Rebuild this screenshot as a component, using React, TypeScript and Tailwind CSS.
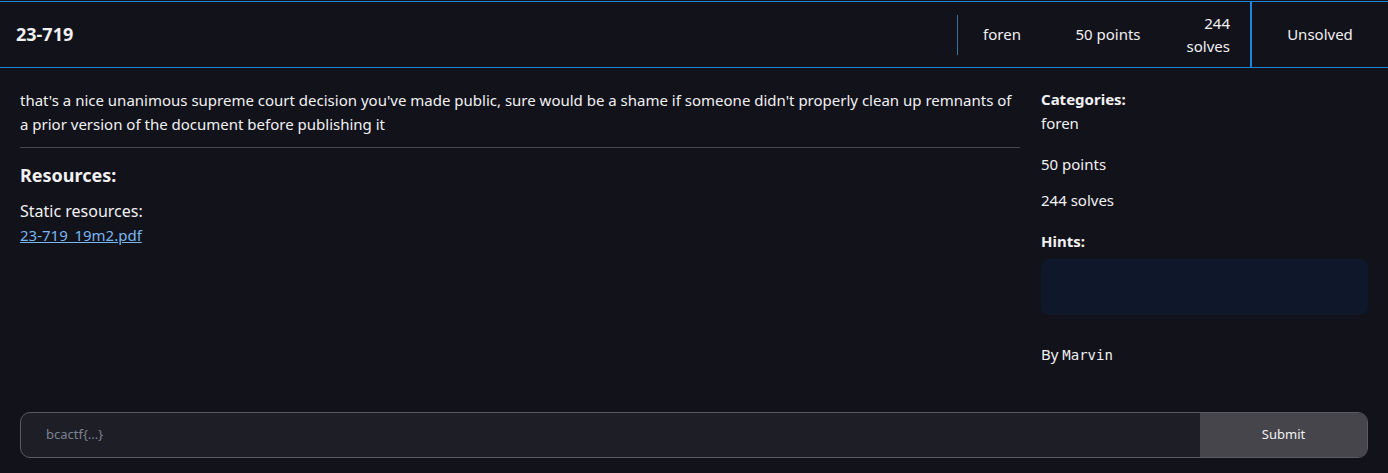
import React from "react";

const font = { fontFamily: '"Segoe UI", "Noto Sans", sans-serif' };

export default function App() {
  return (
    <div
      className="w-[1388px] h-[473px] bg-[#11121a] text-[#f1f1f3] overflow-hidden font-['Noto_Sans',sans-serif]"
      style={font}
    >
      {/* Header */}
      <div className="mt-px h-px bg-[#1f86dc]" />
      <div className="h-[65px] flex items-stretch">
        <div className="flex-1 flex items-center pl-4 text-[18px] font-bold">23-719</div>
        <div className="flex items-center">
          <div className="w-px h-[40px] bg-[#3d6f9e]" />
          <div className="w-[88px] text-center text-[15px]">foren</div>
          <div className="w-[124px] text-center text-[15px]">50 points</div>
          <div className="w-[60px] text-right text-[15px] leading-[23px] pr-[20px] box-content">
            244
            <br />
            solves
          </div>
        </div>
        <div className="w-[2px] bg-[#1f86dc]" />
        <div className="w-[136px] flex items-center justify-center text-[15px]">Unsolved</div>
      </div>
      <div className="h-px bg-[#1f86dc]" />

      {/* Body */}
      <div className="flex px-5 pt-[19px]">
        <div className="w-[1000px] pt-px">
          <p className="text-[15px] leading-[24px]">
            that's a nice unanimous supreme court decision you've made public, sure would be a shame if someone
            didn't properly clean up remnants of a prior version of the document before publishing it
          </p>
          <div className="h-px bg-[#47474f] mt-[11px]" />
          <h3 className="text-[18px] font-bold mt-[14px]">Resources:</h3>
          <div className="text-[16px] mt-[10px] leading-[24px]">Static resources:</div>
          <a href="#" className="text-[15px] text-[#78b6f0] underline leading-[24px]">
            23-719_19m2.pdf
          </a>
        </div>
        <div className="ml-[21px] flex-1 text-[15px]">
          <div className="font-bold leading-[24px]">Categories:</div>
          <div className="leading-[24px]">foren</div>
          <div className="mt-[17px] leading-[24px]">50 points</div>
          <div className="mt-[12px] leading-[24px]">244 solves</div>
          <div className="mt-[17px] font-bold leading-[24px]">Hints:</div>
          <div className="mt-[6px] h-[56px] rounded-lg bg-[#0f172a]" />
          <div className="mt-[27px] leading-[24px]">
            By <span className="font-['DejaVu_Sans_Mono',monospace] text-[14px]">Marvin</span>
          </div>
        </div>
      </div>

      {/* Flag input */}
      <div className="px-5 mt-[45px]">
        <div className="flex h-[46px] rounded-[10px] border border-[#5a5a62] overflow-hidden bg-[#1e1f26]">
          <input
            className="flex-1 bg-transparent pl-[25px] text-[13px] text-[#f1f1f3] placeholder-[#7b8191] outline-none"
            placeholder="bcactf{...}"
          />
          <button className="w-[167px] bg-[#46454c] text-[13px] text-[#f1f1f3]">Submit</button>
        </div>
      </div>
    </div>
  );
}
